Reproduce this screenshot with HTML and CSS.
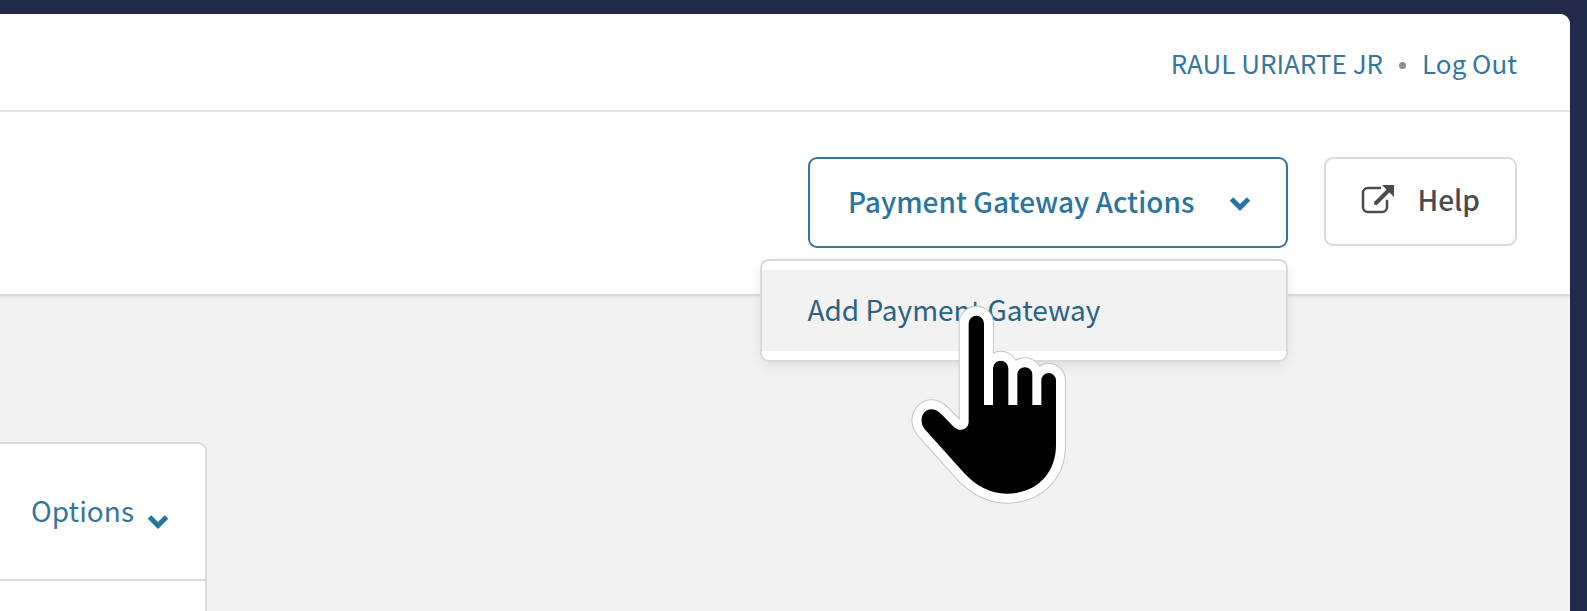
FILE: index.html
```
<!DOCTYPE html>
<html lang="en">
<head>
<meta charset="utf-8">
<title>Payment Gateways</title>
<link rel="stylesheet" href="styles.css">
</head>
<body>
<div class="page">
	<header class="topbar">
		<a href="#">RAUL URIARTE JR</a>
		<span class="dot"></span>
		<a href="#">Log Out</a>
	</header>
	<div class="toolbar">
		<div class="dropdown">
			<button type="button" class="btn btn-primary" aria-haspopup="true" aria-expanded="true">
				Payment Gateway Actions
				<svg class="chevron" viewBox="0 0 22 16" aria-hidden="true"><path d="M2.500 3L11 11.500L19.500 3"/></svg>
			</button>
			<div class="menu">
				<a href="#" class="menu-item">Add Payment Gateway</a>
				<!-- hand pointer -->
				<svg class="pointer" viewBox="54 45 492 606" aria-hidden="true">
					<defs>
						<path id="hand" d="M236 100a23 23 0 0 1 46 0V345H309V235a23 23 0 0 1 46 0V345H382V254a22.500 22.500 0 0 1 45 0V345H454V271a22 22 0 0 1 44 0V465C498 550 440 611 350 611C300 611 260 588 225 552L103 416C84 388 100 358 124 358C142 358 155 373 166 385L188 407C204 427 236 423 236 394Z"/>
					</defs>
					<use href="#hand" class="pointer-edge"/>
					<use href="#hand" class="pointer-border"/>
					<use href="#hand"/>
				</svg>
			</div>
		</div>
		<button type="button" class="btn btn-help">
			<svg class="external" viewBox="0 0 34 30" aria-hidden="true">
				<path class="box" d="M19 4H7a5 5 0 0 0-5 5v14a5 5 0 0 0 5 5h14a5 5 0 0 0 5-5v-6"/>
				<path class="arrow" d="M15 19L28 6"/>
				<path class="head" d="M21 1H33V13Z"/>
			</svg>
			Help
		</button>
	</div>
	<main class="content">
		<div class="card">
			<div class="row">
				<button type="button" class="options">
					Options
					<svg class="chevron" viewBox="0 0 22 16" aria-hidden="true"><path d="M2.500 3L11 11.500L19.500 3"/></svg>
				</button>
			</div>
			<div class="row row-empty"></div>
		</div>
	</main>
</div>
</body>
</html>
```
FILE: styles.css
```
*{box-sizing:border-box;}
html,body{height:100%;}
body{margin:0;padding:14px 17px 0 0;background:#212a4b;font:28px/40px "Noto Sans CJK SC","Noto Sans",sans-serif;color:#4a4a4a;}
a{color:#35779c;text-decoration:none;}
button{font:inherit;cursor:pointer;}
.page{display:flex;flex-direction:column;height:100%;background:#f2f2f2;border-radius:0 10px 0 0;}

.topbar{display:flex;justify-content:flex-end;align-items:center;gap:16px;padding:29px 53px 27px;background:#fff;border-bottom:2px solid #e6e6e6;border-radius:0 10px 0 0;font-size:26px;}
.dot{width:7px;height:7px;margin-top:4px;border-radius:50%;background:#8e8e8e;}

.toolbar{display:flex;justify-content:flex-end;align-items:flex-start;gap:36px;padding:45px 53px 46px;background:#fff;border-bottom:2px solid #d9d9d9;box-shadow:0 1px 3px rgba(0,0,0,.08);}
.dropdown{position:relative;}
.btn{display:flex;align-items:center;padding:20px 35px 25px;background:#fff;border:2px solid #d9dadc;border-radius:9px;font-weight:500;white-space:nowrap;}
.btn-primary{gap:35px;padding:22px 35px 25px 38px;border-color:#35779c;color:#2a75a0;}
.btn-help{gap:22px;color:#4a4b4e;}
.btn-primary .chevron{margin-top:6px;}
.chevron{width:22px;height:16px;fill:none;stroke:#2574a1;stroke-width:5;}
.external{width:34px;height:30px;fill:none;stroke:#4a4b4e;}
.external .box{stroke-width:2.500;stroke-linecap:round;}
.external .arrow{stroke-width:4;stroke-linecap:round;}
.external .head{fill:#4a4b4e;stroke:none;}

.menu{position:absolute;top:100%;right:0;z-index:10;width:528px;margin-top:11px;padding:9px 0;background:#fff;border:2px solid #dadada;border-radius:9px;box-shadow:0 4px 12px rgba(0,0,0,.08);}
.menu-item{display:block;padding:19px 45px 22px;background:#f2f2f2;color:#2a6285;}
.pointer{position:absolute;left:146px;top:44px;width:164px;height:202px;pointer-events:none;}
.pointer-edge{stroke:#c4c4c4;stroke-width:60;stroke-linejoin:round;}
.pointer-border{stroke:#fff;stroke-width:54;stroke-linejoin:round;}

.content{flex:1;display:flex;padding-top:146px;}
.card{width:207px;background:#fff;border:2px solid #dadada;border-width:2px 2px 0 0;border-radius:0 9px 0 0;}
.row{display:flex;justify-content:flex-end;padding:46px 36px 49px 0;}
.row + .row{border-top:2px solid #dadada;}
.row-empty{padding:0;}
.options{display:flex;align-items:center;gap:13px;padding:0;border:0;background:none;color:#35779c;}
.options .chevron{margin-top:24px;}
```
